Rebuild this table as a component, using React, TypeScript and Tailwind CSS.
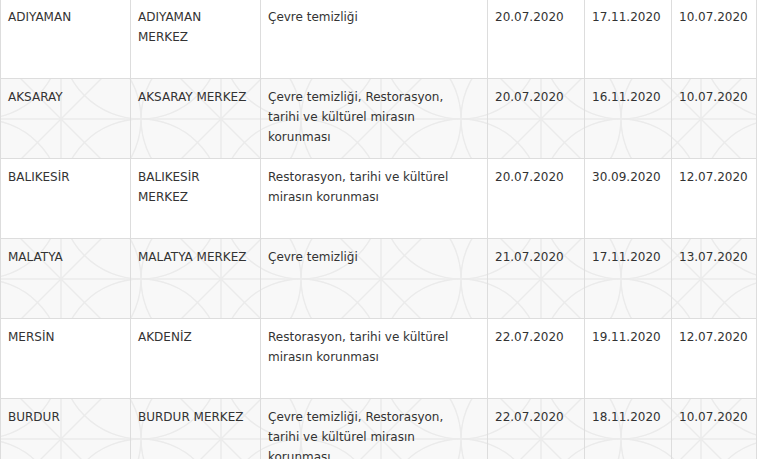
import React from "react";

type Row = [string, string, string, string, string, string];

const rows: Row[] = [
  ["ADIYAMAN", "ADIYAMAN MERKEZ", "Çevre temizliği", "20.07.2020", "17.11.2020", "10.07.2020"],
  ["AKSARAY", "AKSARAY MERKEZ", "Çevre temizliği, Restorasyon, tarihi ve kültürel mirasın korunması", "20.07.2020", "16.11.2020", "10.07.2020"],
  ["BALIKESİR", "BALIKESİR MERKEZ", "Restorasyon, tarihi ve kültürel mirasın korunması", "20.07.2020", "30.09.2020", "12.07.2020"],
  ["MALATYA", "MALATYA MERKEZ", "Çevre temizliği", "21.07.2020", "17.11.2020", "13.07.2020"],
  ["MERSİN", "AKDENİZ", "Restorasyon, tarihi ve kültürel mirasın korunması", "22.07.2020", "19.11.2020", "12.07.2020"],
  ["BURDUR", "BURDUR MERKEZ", "Çevre temizliği, Restorasyon, tarihi ve kültürel mirasın korunması", "22.07.2020", "18.11.2020", "10.07.2020"],
];

function Pattern({ id }: { id: string }) {
  return (
    <svg className="absolute inset-0 w-full h-full" aria-hidden="true">
      <defs>
        <pattern id={id} x="-20" y="-40" width="160" height="160" patternUnits="userSpaceOnUse">
          <g fill="none" stroke="#ebebeb" strokeWidth="1.5">
            <circle cx="0" cy="0" r="80" />
            <circle cx="160" cy="0" r="80" />
            <circle cx="0" cy="160" r="80" />
            <circle cx="160" cy="160" r="80" />
            <circle cx="80" cy="80" r="80" />
            <line x1="80" y1="0" x2="80" y2="160" />
            <line x1="0" y1="0" x2="160" y2="160" />
            <line x1="160" y1="0" x2="0" y2="160" />
            <line x1="0" y1="80" x2="160" y2="80" />
          </g>
        </pattern>
      </defs>
      <rect width="100%" height="100%" fill={`url(#${id})`} />
    </svg>
  );
}

export default function App() {
  return (
    <div
      className="w-[762px] h-[459px] overflow-hidden bg-white text-[12px] leading-[20px] text-[#333333]"
      style={{ fontFamily: '"DejaVu Sans", Verdana, sans-serif' }}
    >
      <div className="w-[757px] -mt-[2px] border-l border-[#dddddd]">
        {rows.map((r, i) => {
          const shaded = i % 2 === 1;
          return (
            <div
              key={i}
              className={`relative grid grid-cols-[130px_130px_227px_97px_87px_85px] h-[80px] border-t border-[#dddddd] ${
                shaded ? "bg-[#f8f8f8]" : "bg-white"
              }`}
            >
              {shaded && <Pattern id={`pat${i}`} />}
              {r.map((c, j) => (
                <div
                  key={j}
                  className={`relative pt-[8px] pl-[7px] border-r border-[#dddddd] ${
                    j === 1 ? "pr-[8px]" : "pr-[14px]"
                  }`}
                >
                  {c}
                </div>
              ))}
            </div>
          );
        })}
      </div>
    </div>
  );
}
